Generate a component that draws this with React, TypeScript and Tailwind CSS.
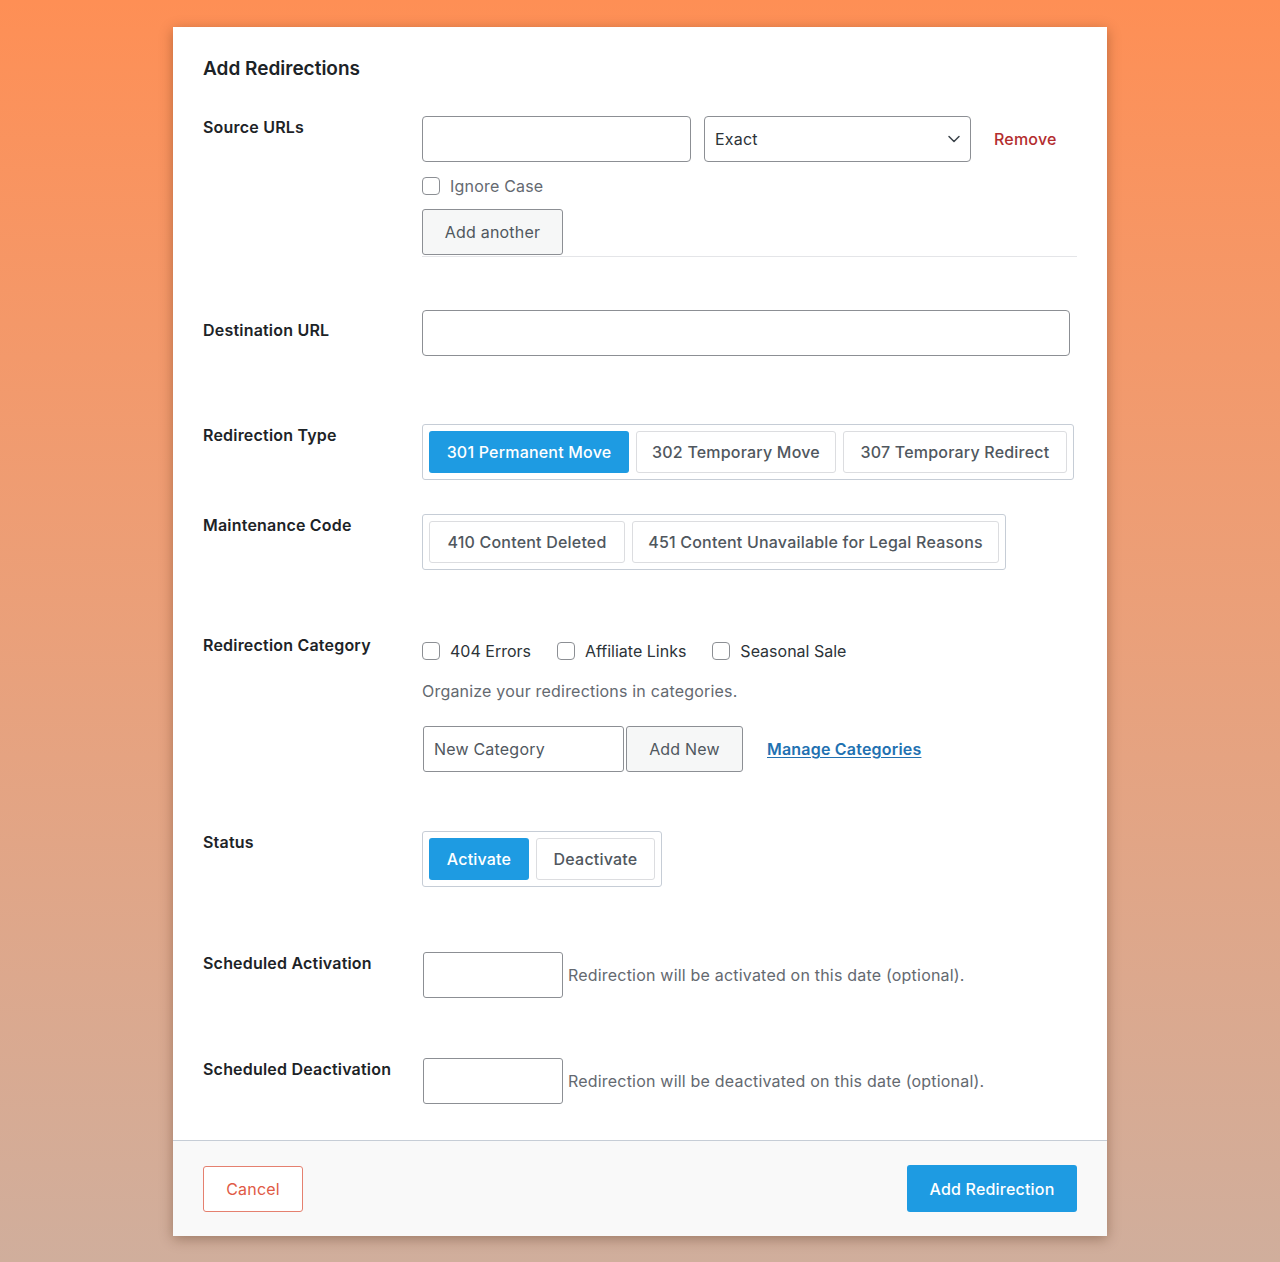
import { ChevronDown } from "lucide-react";

/*
    Add Redirections modal: source/destination fields, redirect type
    toggles, categories, status and scheduling, plus footer actions
*/

type RowProps = {
    label: string;
    className?: string;
    labelClassName?: string;
    children: React.ReactNode;
};

function Row({ label, className = "", labelClassName = "", children }: RowProps) {
    return (
        <div className={`flex items-start ${className}`}>
            <div className={`w-[219px] shrink-0 text-[16px] leading-[22px] font-semibold text-[#1d2327] ${labelClassName}`}>
                {label}
            </div>
            <div className="flex-1">{children}</div>
        </div>
    );
}

function Checkbox({ label }: { label: string }) {
    return (
        <label className="flex items-center gap-[10px] text-[16px] leading-[24px]">
            <span className="w-[18px] h-[18px] rounded-[4px] border border-[#8c8f94] bg-white" />
            {label}
        </label>
    );
}

type ToggleOption = { text: string; width: string };

//segmented button group, first item can be the active one
function ToggleGroup({ options, active }: { options: ToggleOption[]; active?: number }) {
    return (
        <div className="inline-flex gap-[7px] p-[6px] border border-[#c6cdd6] rounded-[3px] bg-white">
            {options.map((opt, i) => (
                <button
                    key={opt.text}
                    className={
                        i === active
                            ? `${opt.width} h-[42px] rounded-[3px] bg-[#1e9be2] text-white text-[16px] font-medium`
                            : `${opt.width} h-[42px] rounded-[3px] border border-[#dcdde0] bg-white text-[#50575e] text-[16px] font-medium`
                    }
                >
                    {opt.text}
                </button>
            ))}
        </div>
    );
}

export default function App() {
    return (
        <div
            className="min-h-screen pt-[27px] pb-[26px] bg-gradient-to-b from-[#fe8f55] via-[#eaa07a] to-[#d0ae9c] flex justify-center tracking-[0.2px]"
            style={{ fontFamily: "Inter, 'Noto Sans', sans-serif" }}
        >
            <div className="w-[934px] bg-white shadow-[0_3px_12px_rgba(60,30,10,0.35)] flex flex-col">
                <div className="px-[30px] pt-[28px]">
                    <h2 className="text-[19px] leading-[28px] font-semibold tracking-normal text-[#1d2327]">Add Redirections</h2>

                    {/* source urls */}
                    <Row label="Source URLs" className="mt-[33px]">
                        <div className="border-b border-[#e4e5e8] pb-[1px]">
                            <div className="flex items-center">
                                <input className="w-[269px] h-[46px] rounded-[4px] border border-[#8c8f94] bg-white px-[10px] outline-none" />
                                <div className="ml-[13px] w-[267px] h-[46px] rounded-[4px] border border-[#8c8f94] bg-white flex items-center justify-between pl-[10px] pr-[6px] text-[16px] text-[#2c3338]">
                                    Exact
                                    <ChevronDown size={20} strokeWidth={1.8} className="text-[#3c434a]" />
                                </div>
                                <a className="ml-[23px] text-[16px] font-medium text-[#b32d2e]">Remove</a>
                            </div>
                            <div className="mt-[12px] text-[#646970]">
                                <Checkbox label="Ignore Case" />
                            </div>
                            <button className="mt-[11px] w-[141px] h-[46px] rounded-[3px] border border-[#8c8f94] bg-[#f6f7f7] text-[16px] text-[#50575e]">
                                Add another
                            </button>
                        </div>
                    </Row>

                    <Row label="Destination URL" className="mt-[53px]" labelClassName="pt-[9px]">
                        <input className="w-[648px] h-[46px] rounded-[4px] border border-[#8c8f94] bg-white px-[10px] outline-none" />
                    </Row>

                    <Row label="Redirection Type" className="mt-[68px]">
                        <ToggleGroup
                            active={0}
                            options={[
                                { text: "301 Permanent Move", width: "w-[200px]" },
                                { text: "302 Temporary Move", width: "w-[200px]" },
                                { text: "307 Temporary Redirect", width: "w-[224px]" },
                            ]}
                        />
                    </Row>

                    <Row label="Maintenance Code" className="mt-[34px]">
                        <ToggleGroup
                            options={[
                                { text: "410 Content Deleted", width: "w-[196px]" },
                                { text: "451 Content Unavailable for Legal Reasons", width: "w-[367px]" },
                            ]}
                        />
                    </Row>

                    {/* categories */}
                    <Row label="Redirection Category" className="mt-[64px]">
                        <div className="pt-[5px]">
                            <div className="flex items-center gap-[26px] tracking-normal text-[#2c3338]">
                                <Checkbox label="404 Errors" />
                                <Checkbox label="Affiliate Links" />
                                <Checkbox label="Seasonal Sale" />
                            </div>
                            <p className="mt-[16px] text-[16px] leading-[24px] text-[#646970]">
                                Organize your redirections in categories.
                            </p>
                            <div className="mt-[23px] flex items-center">
                                <input
                                    placeholder="New Category"
                                    className="ml-[1px] w-[201px] h-[46px] rounded-[3px] border border-[#8c8f94] bg-white px-[10px] text-[16px] placeholder:text-[#50575e] outline-none"
                                />
                                <button className="ml-[2px] w-[117px] h-[46px] rounded-[3px] border border-[#8c8f94] bg-[#f6f7f7] text-[16px] text-[#50575e]">
                                    Add New
                                </button>
                                <a className="ml-[24px] text-[16px] font-semibold text-[#2271b1] underline underline-offset-2">
                                    Manage Categories
                                </a>
                            </div>
                        </div>
                    </Row>

                    <Row label="Status" className="mt-[59px]">
                        <ToggleGroup
                            active={0}
                            options={[
                                { text: "Activate", width: "w-[100px]" },
                                { text: "Deactivate", width: "w-[119px]" },
                            ]}
                        />
                    </Row>

                    <Row label="Scheduled Activation" className="mt-[65px]">
                        <div className="flex items-center">
                            <input className="ml-[1px] w-[140px] h-[46px] rounded-[3px] border border-[#8c8f94] bg-white outline-none" />
                            <span className="ml-[5px] text-[16px] text-[#646970]">
                                Redirection will be activated on this date (optional).
                            </span>
                        </div>
                    </Row>

                    <Row label="Scheduled Deactivation" className="mt-[60px]">
                        <div className="flex items-center">
                            <input className="ml-[1px] w-[140px] h-[46px] rounded-[3px] border border-[#8c8f94] bg-white outline-none" />
                            <span className="ml-[5px] text-[16px] text-[#646970]">
                                Redirection will be deactivated on this date (optional).
                            </span>
                        </div>
                    </Row>
                </div>

                {/* footer actions */}
                <div className="mt-[36px] h-[96px] border-t border-[#c6cdd6] bg-[#f9f9f9] px-[30px] flex items-center justify-between">
                    <button className="w-[100px] h-[46px] rounded-[3px] border border-[#e5806f] bg-white text-[16px] text-[#e05a45]">
                        Cancel
                    </button>
                    <button className="w-[170px] h-[47px] rounded-[3px] bg-[#1e9be2] text-[16px] font-medium text-white">
                        Add Redirection
                    </button>
                </div>
            </div>
        </div>
    );
}
